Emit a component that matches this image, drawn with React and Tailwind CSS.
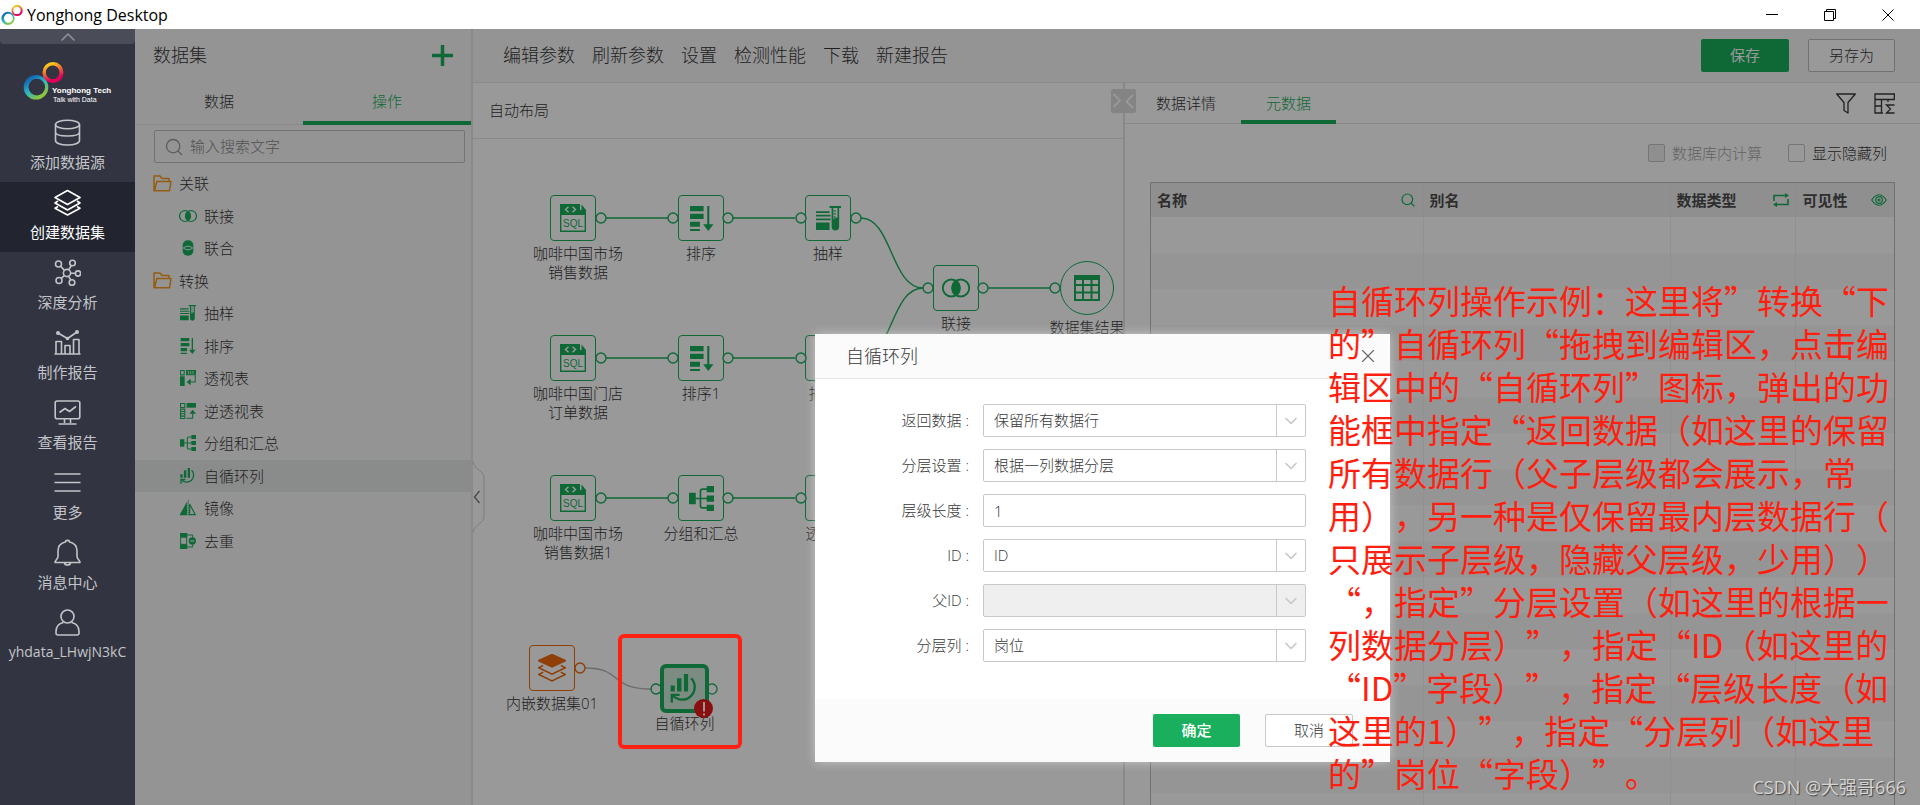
import { Search, X, ChevronDown, ChevronUp } from "lucide-react"

const MENU = [
  { label: "添加数据源", icon: DatabaseIcon },
  { label: "创建数据集", icon: LayersIcon, active: true },
  { label: "深度分析", icon: NetworkIcon },
  { label: "制作报告", icon: ReportIcon },
  { label: "查看报告", icon: MonitorIcon },
  { label: "更多", icon: MoreIcon },
  { label: "消息中心", icon: BellIcon },
  { label: "yhdata_LHwjN3kC", icon: UserIcon },
]

const TREE = [
  { label: "关联", folder: true },
  { label: "联接", icon: JoinIcon },
  { label: "联合", icon: UnionIcon },
  { label: "转换", folder: true },
  { label: "抽样", icon: SampleIcon },
  { label: "排序", icon: SortIcon },
  { label: "透视表", icon: PivotIcon },
  { label: "逆透视表", icon: UnpivotIcon },
  { label: "分组和汇总", icon: GroupIcon },
  { label: "自循环列", icon: LoopIcon, active: true },
  { label: "镜像", icon: MirrorIcon },
  { label: "去重", icon: DistinctIcon },
]

const TOOLBAR = ["编辑参数", "刷新参数", "设置", "检测性能", "下载", "新建报告"]

// x / y is the centre of the box on the canvas
const NODES = [
  { id: "sql1", x: 100, y: 79, icon: SqlIcon, lines: ["咖啡中国市场", "销售数据"] },
  { id: "sort1", x: 228, y: 79, icon: SortIcon, lines: ["排序"] },
  { id: "sample1", x: 355, y: 79, icon: SampleIcon, lines: ["抽样"] },
  { id: "sql2", x: 100, y: 219, icon: SqlIcon, lines: ["咖啡中国门店", "订单数据"] },
  { id: "sort2", x: 228, y: 219, icon: SortIcon, lines: ["排序1"] },
  { id: "sample2", x: 355, y: 219, icon: SampleIcon, lines: ["抽样1"] },
  { id: "sql3", x: 100, y: 359, icon: SqlIcon, lines: ["咖啡中国市场", "销售数据1"] },
  { id: "group", x: 228, y: 359, icon: GroupIcon, lines: ["分组和汇总"] },
  { id: "pivot", x: 355, y: 359, icon: PivotIcon, lines: ["透视表"] },
  { id: "join", x: 483, y: 149, icon: JoinIcon, lines: ["联接"] },
]

const LINKS = [
  "M133 79H195", "M260 79H322",
  "M133 219H195", "M260 219H322",
  "M133 359H195", "M260 359H322",
  "M515 149H577",
  "M388 79C419 79 418 149 450 149",
  "M388 219C419 219 418 149 450 149",
]

const PORTS = [
  [128, 79], [200, 79], [255, 79], [328, 79], [383, 79],
  [128, 219], [200, 219], [255, 219], [328, 219],
  [128, 359], [200, 359], [255, 359], [328, 359],
  [455, 149], [510, 149], [582, 149],
]

const FIELDS = [
  { id: "ret", label: "返回数据 :", value: "保留所有数据行" },
  { id: "level", label: "分层设置 :", value: "根据一列数据分层" },
  { id: "len", label: "层级长度 :", value: "1", text: true },
  { id: "id", label: "ID :", value: "ID" },
  { id: "pid", label: "父ID :", value: "", disabled: true },
  { id: "col", label: "分层列 :", value: "岗位" },
]

const NOTE = [
  "自循环列操作示例：这里将”转换“下",
  "的”自循环列“拖拽到编辑区，点击编",
  "辑区中的“自循环列”图标，弹出的功",
  "能框中指定“返回数据（如这里的保留",
  "所有数据行（父子层级都会展示，常",
  "用），另一种是仅保留最内层数据行（",
  "只展示子层级，隐藏父层级，少用））",
  "“，指定”分层设置（如这里的根据一",
  "列数据分层）”，指定“ID（如这里的",
  "“ID”字段）”，指定“层级长度（如",
  "这里的1）”，指定“分层列（如这里",
  "的”岗位“字段）”。",
]

/* ---------- sidebar icons ---------- */

function Line({ children, className = "size-[27px]" }) {
  return (
    <svg viewBox="0 0 27 27" className={className} fill="none" stroke="currentColor" strokeWidth="1.6" strokeLinejoin="round">
      {children}
    </svg>
  )
}

function DatabaseIcon() {
  return (
    <Line>
      <ellipse cx="13.5" cy="5.5" rx="12" ry="4.2" />
      <path d="M1.500 5.500V21.500C1.500 24 6.500 26 13.500 26S25.500 24 25.500 21.500V5.500M1.500 13C1.500 15.500 6.500 17 13.500 17S25.500 15.500 25.500 13" />
    </Line>
  )
}

function LayersIcon() {
  return (
    <Line>
      <path d="M13.500 1.500L26 8.500L13.500 15.500L1 8.500Z" />
      <path d="M4 12L1 14L13.500 21L26 14L23 12M4 17.500L1 19.200L13.500 26L26 19.200L23 17.500" />
    </Line>
  )
}

function NetworkIcon() {
  return (
    <Line>
      <circle cx="13" cy="14" r="3.600" />
      <circle cx="4.500" cy="5" r="3" />
      <circle cx="18.500" cy="4" r="2.800" />
      <circle cx="24" cy="14.500" r="2.600" />
      <circle cx="5" cy="21.500" r="3" />
      <circle cx="18" cy="23.500" r="2.800" />
      <path d="M6.600 7.200L10.500 11.400M17.300 6.500L14.700 10.800M16.600 14.200H21.400M7.200 19.400L10.300 16.600M14.600 17.300L16.800 21" />
    </Line>
  )
}

function ReportIcon() {
  return (
    <Line>
      <path d="M0.500 25H26.500M2 25V12.500H7.500V25M11 25V16.500H16V25M19.500 25V10.500H25V25M4 4L13.500 9.500L23 3" />
      <circle cx="4" cy="4" r="1.200" fill="currentColor" />
      <circle cx="23" cy="3" r="1.200" fill="currentColor" />
      <circle cx="13.500" cy="9.500" r="1" fill="currentColor" />
    </Line>
  )
}

function MonitorIcon() {
  return (
    <Line>
      <rect x="1.200" y="2" width="24.600" height="17.800" rx="2" />
      <path d="M5.500 13.500L11 9.500L15.500 12.500L22 7.500M10.500 20V24M16.500 20V24M4.500 25H22.500" />
    </Line>
  )
}

function MoreIcon() {
  return (
    <Line>
      <path d="M0.500 5H26.500M0.500 13.500H26.500M0.500 22H26.500" />
    </Line>
  )
}

function BellIcon() {
  return (
    <Line>
      <path d="M11.500 3C11.500 0.800 15.500 0.800 15.500 3C20 4 23 7.500 23 12V17.500C23 20 26 21.500 26 23.500H1C1 21.500 4 20 4 17.500V12C4 7.500 7 4 11.500 3ZM10.500 24C11 26.700 16 26.700 16.500 24" />
    </Line>
  )
}

function UserIcon() {
  return (
    <Line>
      <circle cx="13.500" cy="7.500" r="6.500" />
      <path d="M9.500 13.500C5 14.500 2 18 2 22.500V24Q2 26 4 26H23Q25 26 25 24V22.500C25 18 22 14.500 17.500 13.500" />
    </Line>
  )
}

/* ---------- operation icons, 24 grid ---------- */

function Glyph({ className, children }) {
  return (
    <svg viewBox="0 0 24 24" className={className} fill="currentColor">
      {children}
    </svg>
  )
}

function SqlIcon({ className }) {
  return (
    <svg viewBox="0 0 26 28" className={className} fill="none">
      <path d="M0 0H20V6H26V11H0Z" fill="currentColor" />
      <path d="M21.500 0.500L26 6H21.500Z" fill="currentColor" />
      <path d="M0.700 10V27.300H25.300V10" stroke="currentColor" strokeWidth="1.400" />
      <path d="M8.500 2.800L5.500 5.500L8.500 8.200M12.500 2.800L15.500 5.500L12.500 8.200" stroke="#fff" strokeWidth="1.400" />
      <text x="13" y="22.500" textAnchor="middle" fontSize="10" fontFamily="Liberation Sans" fill="currentColor">SQL</text>
    </svg>
  )
}

function SortIcon({ className }) {
  return (
    <Glyph className={className}>
      <path d="M1 0H14V5H1ZM1 7.500H14V12.500H1ZM1 15H10.500V20H1ZM1 22H10.500V24H1ZM17.500 0H19.500V17.500H23.500L18.500 24L13.500 17.500H17.500Z" />
    </Glyph>
  )
}

function SampleIcon({ className }) {
  return (
    <Glyph className={className}>
      <path d="M0 5H13V6.600H0ZM0 8.500H14V10.100H0ZM0 12H14V13.600H0ZM0 15.800H13V23H0Z" />
      <path d="M13 0H24V1.800H13ZM15 1.800H16.600V13H15ZM20.600 1.800H22.200V12H20.600ZM17 4H19V5.200H17ZM17 7H19V8.200H17ZM17 10H19V11.200H17Z" />
      <path d="M15 13L22.200 10.500V20A3.600 3.600 0 0 1 15 20Z" />
    </Glyph>
  )
}

function JoinIcon({ className }) {
  return (
    <Glyph className={className}>
      <circle cx="8" cy="12" r="7.300" fill="none" stroke="currentColor" strokeWidth="1.600" />
      <circle cx="16" cy="12" r="7.300" fill="none" stroke="currentColor" strokeWidth="1.600" />
      <path d="M12 5.500A8 8 0 0 1 12 18.500A8 8 0 0 1 12 5.500Z" stroke="currentColor" />
    </Glyph>
  )
}

function UnionIcon({ className }) {
  return (
    <Glyph className={className}>
      <rect x="4" y="0.500" width="16" height="23" rx="7.500" />
      <path d="M5 12Q12 6.500 19 12Q12 17.500 5 12Z" fill="none" stroke="#fff" strokeWidth="1.400" />
    </Glyph>
  )
}

function PivotIcon({ className }) {
  return (
    <Glyph className={className}>
      <path d="M0 9.500H7V24H0ZM9 0H24V8H9Z" />
      <path d="M0.700 0.700H6.300V7.300H0.700ZM22.800 8V18H15" fill="none" stroke="currentColor" strokeWidth="1.600" />
      <path d="M12.500 1.500V6.500M16 1.500V6.500M19.500 1.500V6.500" stroke="#fff" strokeWidth="1.200" />
      <path d="M10 18L16 13V23Z" />
    </Glyph>
  )
}

function UnpivotIcon({ className }) {
  return (
    <Glyph className={className}>
      <path d="M10 0H24V7H10Z" />
      <path d="M0.800 0.800H7.200V6.800H0.800ZM0.800 9.200H7.200V23.200H0.800ZM1 12.700H7M1 16.200H7M1 19.700H7M10 22.800H19V15" fill="none" stroke="currentColor" strokeWidth="1.600" />
      <path d="M14 16L19 10L24 16Z" />
    </Glyph>
  )
}

function GroupIcon({ className }) {
  return (
    <Glyph className={className}>
      <path d="M0 6.500H6.500V17.500H0ZM17 0H24V6H17ZM17 9H24V15H17ZM17 18H24V24H17Z" />
      <path d="M6 12H18M18 3H13Q11 3 11 5V19Q11 21 13 21H18" fill="none" stroke="currentColor" strokeWidth="1.600" />
    </Glyph>
  )
}

function LoopIcon({ className }) {
  return (
    <Glyph className={className}>
      <path d="M0.500 9.500H4V14.500H0.500ZM5.800 3.500H9.500V14.500H5.800ZM11.500 0H15V14.500H11.500Z" />
      <path d="M17.500 3.500A10.300 10.300 0 1 1 2.500 18" fill="none" stroke="currentColor" strokeWidth="2" />
      <path d="M1.500 23.500V17.300H8" fill="none" stroke="currentColor" strokeWidth="2" />
    </Glyph>
  )
}

function MirrorIcon({ className }) {
  return (
    <Glyph className={className}>
      <path d="M11 2V23H-1Z" />
      <path d="M14.500 6.500V22H23Z" fill="none" stroke="currentColor" strokeWidth="1.800" />
      <path d="M12.800 0V24" stroke="currentColor" strokeWidth="1.400" strokeDasharray="2 1.500" />
    </Glyph>
  )
}

function DistinctIcon({ className }) {
  return (
    <Glyph className={className}>
      <path d="M0 0H11V7H0ZM0 17H11V24H0Z" />
      <path d="M1 7V17H10V7M11 3H19V7M11 21H19V17" fill="none" stroke="currentColor" strokeWidth="1.500" />
      <circle cx="18.500" cy="12" r="5.500" />
      <path d="M15.500 12H21.500" stroke="#fff" strokeWidth="1.600" />
    </Glyph>
  )
}

function FolderIcon() {
  return (
    <svg viewBox="0 0 19 17" className="h-[17px] w-[19px]" fill="none" stroke="#f79a1c" strokeWidth="1.500" strokeLinejoin="round">
      <path d="M2.500 15.800H1V1H7L9 3.500H16V6.500M1.500 15.800L3.800 6.500H18L16.500 15.800Z" />
    </svg>
  )
}

function Rings({ className }) {
  return (
    <svg viewBox="-1 0 41 38" className={className} fill="none">
      <defs>
        <linearGradient id="cool" x1="0" y1="0" x2="0.700" y2="1">
          <stop offset="0.200" stopColor="#1268b3" />
          <stop offset="0.550" stopColor="#2cb4c4" />
          <stop offset="0.900" stopColor="#8cc63f" />
        </linearGradient>
        <linearGradient id="warm" x1="0" y1="0" x2="0.400" y2="1">
          <stop offset="0.200" stopColor="#fbc91b" />
          <stop offset="0.550" stopColor="#f0663a" />
          <stop offset="0.900" stopColor="#e4005a" />
        </linearGradient>
      </defs>
      <path fillRule="evenodd" fill="url(#cool)" d="M12 13A12.300 12.300 0 1 1 12 37.600A12.300 12.300 0 1 1 12 13ZM12.800 16.800A8.300 8.300 0 1 0 12.800 33.400A8.300 8.300 0 1 0 12.800 16.800Z" />
      <path fillRule="evenodd" fill="url(#warm)" d="M29 0A10.500 10.500 0 1 1 29 21A10.500 10.500 0 1 1 29 0ZM28.700 3.600A6.800 6.800 0 1 0 28.700 17.200A6.800 6.800 0 1 0 28.700 3.600Z" />
    </svg>
  )
}

/* ---------- layout ---------- */

function TitleBar() {
  return (
    <header className="flex h-[29px] shrink-0 items-center bg-white pl-px pr-[26px] text-black">
      <Rings className="size-[22px]" />
      <h1 className="ml-1 font-['Open_Sans'] text-[16px] leading-6">Yonghong Desktop</h1>
      <div className="ml-auto flex items-center gap-[46px]">
        <button aria-label="最小化">
          <svg viewBox="0 0 12 12" className="size-3" stroke="currentColor">
            <path d="M0 5.500H12" />
          </svg>
        </button>
        <button aria-label="还原">
          <svg viewBox="0 0 12 12" className="size-3" fill="none" stroke="currentColor">
            <path d="M0.500 2.500H9.500V11.500H0.500ZM2.500 2.500V0.500H11.500V9.500H9.500" />
          </svg>
        </button>
        <button aria-label="关闭">
          <svg viewBox="0 0 12 12" className="size-3" stroke="currentColor">
            <path d="M0.500 0.500L11.500 11.500M11.500 0.500L0.500 11.500" />
          </svg>
        </button>
      </div>
    </header>
  )
}

function Sidebar() {
  return (
    <nav className="w-[135px] shrink-0 bg-[#323541] text-[#c3c4c8]">
      <button aria-label="收起" className="flex h-[15px] w-full items-center justify-center rounded-b-sm bg-[#4a4d58] text-[#8f9199]">
        <ChevronUp size={24} strokeWidth={1.6} />
      </button>
      <div className="flex h-[68px] pl-[23px] pt-[18px]">
        <svg viewBox="0 0 112 42" className="h-[42px] w-[112px]">
          <svg width="41" height="38"><Rings /></svg>
          <text x="29" y="31" fontSize="8" fontWeight="700" fontFamily="Liberation Sans" fill="#fff">Yonghong Tech</text>
          <text x="30" y="40" fontSize="7" fontFamily="Liberation Sans" fill="#fff">Talk with Data</text>
        </svg>
      </div>
      {MENU.map(({ label, icon: Icon, active }) => (
        <a
          key={label}
          href="#"
          className={
            active
              ? "flex h-[70px] flex-col items-center gap-[6px] bg-[#22252f] pt-[7px] text-[15px] leading-5 text-white"
              : "flex h-[70px] flex-col items-center gap-[6px] pt-[7px] text-[15px] leading-5"
          }
        >
          <Icon />
          <span className={Icon === UserIcon ? "text-[14px]" : ""}>{label}</span>
        </a>
      ))}
    </nav>
  )
}

function DatasetPanel() {
  return (
    <aside className="flex w-[338px] shrink-0 flex-col border-r-2 border-[#e6e6ea] bg-[#f7f7f7]">
      <div className="flex h-[53px] items-center justify-between pl-[18px] pr-[18px]">
        <h2 className="text-[18px]">数据集</h2>
        <button aria-label="新建" className="text-[#1aaf5d]">
          <svg viewBox="0 0 21 21" className="size-[21px]" stroke="currentColor" strokeWidth="3.500">
            <path d="M0 10.500H21M10.500 0V21" />
          </svg>
        </button>
      </div>
      <div className="grid h-[43px] grid-cols-2 border-b border-[#e4e4e4] text-[15px]">
        <button className="pb-1">数据</button>
        <button className="-mb-px border-b-4 border-[#1aaf5d] text-[#1aaf5d]">操作</button>
      </div>
      <label className="ml-[19px] mr-[6px] mt-[5px] flex h-[33px] items-center gap-[6px] rounded-xs border border-[#c0c0c0] pl-[9px] text-[#999]">
        <Search size={20} strokeWidth={1.6} className="shrink-0" />
        <input aria-label="搜索" placeholder="输入搜索文字" className="w-full text-[15px] outline-none placeholder:text-[#888]" />
      </label>
      <ul className="mt-1 grid h-[390px] auto-rows-fr text-[15px]">
        {TREE.map(({ label, icon: Icon, folder, active }) => (
          <li
            key={label}
            className={
              folder
                ? "flex items-center gap-[7px] pl-[18px]"
                : active
                  ? "flex items-center gap-[7px] bg-[#e7eae9] pl-[44px]"
                  : "flex items-center gap-[7px] pl-[44px]"
            }
          >
            {folder ? <FolderIcon /> : (
              <span className="flex w-[18px] justify-center text-[#1aaf5d]">
                <Icon className={Icon === JoinIcon ? "size-[18px]" : "size-4"} />
              </span>
            )}
            {label}
          </li>
        ))}
      </ul>
    </aside>
  )
}

function Toolbar() {
  return (
    <div className="flex h-[54px] shrink-0 items-center border-b border-[#e6e6ea] bg-[#f7f7f7] pl-[30px] pr-[25px]">
      <div className="flex gap-[17px] text-[18px]">
        {TOOLBAR.map((t) => <button key={t}>{t}</button>)}
      </div>
      <div className="ml-auto flex gap-[19px] text-[15px]">
        <button className="h-[33px] w-[88px] rounded-xs bg-[#1aaf5d] font-normal text-white">保存</button>
        <button className="h-[33px] w-[87px] rounded-xs border border-[#bcbcbc] bg-white">另存为</button>
      </div>
    </div>
  )
}

function Node({ x, y, icon: Icon, lines }) {
  return (
    <div className="absolute flex size-[46px] -translate-x-1/2 -translate-y-1/2 items-center justify-center rounded-sm border border-[#1aaf5d] bg-white text-[#1aaf5d]" style={{ left: x, top: y }}>
      <Icon className={Icon === SqlIcon ? "h-7 w-[26px]" : Icon === JoinIcon ? "size-7" : "size-[25px]"} />
      <p className={
        Icon === SqlIcon
          ? "absolute left-[27px] top-[48px] -translate-x-1/2 whitespace-nowrap text-center text-[15px] leading-[19px] text-[#383838]"
          : "absolute left-1/2 top-[48px] -translate-x-1/2 whitespace-nowrap text-center text-[15px] leading-[19px] text-[#383838]"
      }>
        {lines.map((l) => <span key={l} className="block">{l}</span>)}
      </p>
    </div>
  )
}

function Canvas() {
  return (
    <section className="flex w-[652px] shrink-0 flex-col border-r-2 border-[#e3e3e3] bg-white">
      <div className="flex h-14 items-center border-b border-[#e6e6ea] pl-4 text-[15px]">
        <button>自动布局</button>
      </div>
      <div className="relative flex-1 overflow-hidden">
        {NODES.map((n) => <Node key={n.id} {...n} />)}
        <div className="absolute left-[587px] top-[122px] flex size-[54px] items-center justify-center rounded-full border border-[#1aaf5d] text-[#1aaf5d]">
          <svg viewBox="0 0 26 26" className="size-[26px]">
            <path d="M0 0H26V26H0Z" fill="currentColor" />
            <path d="M2 5H8V9H2ZM10 5H16.500V9H10ZM18.500 5H24V9H18.500ZM2 11H8V16.500H2ZM10 11H16.500V16.500H10ZM18.500 11H24V16.500H18.500ZM2 18.500H8V24H2ZM10 18.500H16.500V24H10ZM18.500 18.500H24V24H18.500Z" fill="#fff" />
          </svg>
          <p className="absolute top-[56px] whitespace-nowrap text-[15px] leading-[19px] text-[#383838]">数据集结果</p>
        </div>

        <div className="absolute left-[56px] top-[506px] flex size-[46px] items-center justify-center rounded-sm border border-[#ee6a0c] text-[#ee6a0c]">
          <svg viewBox="0 0 27 27" className="size-7" fill="none" stroke="currentColor" strokeWidth="1.500">
            <path d="M13.500 0.500L26.500 6.500L13.500 12.500L0.500 6.500Z" fill="currentColor" />
            <path d="M5 11L0.800 13.200L13.500 19.500L26.200 13.200L22 11M5 17.500L0.800 19.700L13.500 26L26.200 19.700L22 17.500" />
          </svg>
          <p className="absolute top-[48px] whitespace-nowrap text-[15px] leading-[19px] text-[#383838]">内嵌数据集01</p>
        </div>
        <div className="absolute left-[187px] top-[525px] flex size-[49px] items-center justify-center rounded-md border-4 border-[#1aaf5d] bg-[#cfeadb] text-[#1aaf5d]">
          <LoopIcon className="size-[29px]" />
          <p className="absolute top-[46px] whitespace-nowrap text-[15px] leading-[19px] text-[#383838]">自循环列</p>
        </div>
        <span className="absolute left-[221px] top-[560px] flex size-[19px] items-center justify-center rounded-full bg-[#e61a1a]">
          <svg viewBox="0 0 4 14" className="h-[14px] w-1" fill="#fff">
            <path d="M1 0H3V9.500H1ZM1 11.500H3V13.500H1Z" />
          </svg>
        </span>

        <svg className="absolute inset-0 size-full" fill="none" stroke="#1aaf5d" strokeWidth="1.400">
          {LINKS.map((d) => <path key={d} d={d} />)}
          {PORTS.map(([x, y]) => <circle key={x + "-" + y} cx={x} cy={y} r="5" fill="#fff" />)}
          <path d="M112 529C150 529 136 550 178 550" stroke="#b5b5b5" />
          <circle cx="107" cy="529" r="5" fill="#fff" stroke="#ee6a0c" />
          <path d="M187 547A5 5 0 1 0 187 553M236 546A5 5 0 1 1 236 554" />
        </svg>
        <button aria-label="收起面板" className="absolute left-0 top-[322px]">
          <svg viewBox="0 0 12 72" className="h-[72px] w-3" fill="#fff" stroke="#cfd0d6">
            <path d="M0 0.500C2 10 11 9 11 17V55C11 63 2 62 0 71.500" />
            <path d="M6.500 30L1.500 36L6.500 42" stroke="#777" fill="none" strokeWidth="1.300" />
          </svg>
        </button>
      </div>
    </section>
  )
}

function MetaPanel() {
  return (
    <section className="relative flex min-w-0 flex-1 flex-col bg-white">
      <button aria-label="切换" className="absolute -left-[14px] top-[6px] rounded-xs bg-[#dcdcdc]">
        <svg viewBox="0 0 25 24" className="h-6 w-[25px]" fill="none" stroke="#fff" strokeWidth="1.800">
          <path d="M2.500 5L9 11.500L2.500 18M22 6L15.500 12.500L22 19" />
        </svg>
      </button>
      <div className="flex h-[41px] shrink-0 border-b border-[#e4e4e4] pl-[21px] pr-[25px] text-[15px]">
        <button className="w-[80px]">数据详情</button>
        <button className="-mb-px ml-[15px] w-[95px] border-b-4 border-[#1aaf5d] pt-1 text-[#1aaf5d]">元数据</button>
        <div className="ml-auto flex items-center gap-[18px]">
          <button aria-label="过滤">
            <svg viewBox="0 0 20 21" className="h-[21px] w-5" fill="none" stroke="currentColor" strokeWidth="1.300" strokeLinejoin="round">
              <path d="M0.700 1H19.300L12 9.500V20L8 17.500V9.500Z" />
            </svg>
          </button>
          <button aria-label="汇总">
            <svg viewBox="0 0 21 21" className="size-[21px]" fill="none" stroke="currentColor" strokeWidth="1.300">
              <path d="M9 20H1V1H20.300V6.500H1M7.500 6.500V20M1 13H7.500M14 6.500V9M20.500 12H12.500L16.500 16L12.500 20H20.500" />
            </svg>
          </button>
        </div>
      </div>
      <div className="flex h-[58px] shrink-0 items-center justify-end gap-[26px] pr-[33px] text-[15px]">
        <label className="flex items-center gap-[7px] text-[#a6a6a6]">
          <input type="checkbox" disabled className="h-[18px] w-[17px] appearance-none rounded-xs border border-[#c4c4c4] bg-[#eee]" />
          数据库内计算
        </label>
        <label className="flex items-center gap-[7px]">
          <input type="checkbox" className="h-[18px] w-[17px] appearance-none rounded-xs border border-[#c4c4c4]" />
          显示隐藏列
        </label>
      </div>
      <div className="ml-[25px] mr-[25px] flex-1 overflow-hidden border border-b-0 border-[#bcbcbc]">
        <table className="w-full table-fixed text-left text-[15px]">
          <colgroup>
            <col className="w-[272px]" />
            <col />
            <col className="w-[125px]" />
            <col className="w-[99px]" />
          </colgroup>
          <thead>
            <tr className="h-[34px] bg-[#efefef] text-[#4d4d4d]">
              <th className="border-r border-[#eaeaea] pl-[6px] pr-[7px] font-bold">
                <span className="flex items-center justify-between">名称<Search size={16} strokeWidth={1.8} className="text-[#1aaf5d]" /></span>
              </th>
              <th className="border-r border-[#eaeaea] px-[6px] font-bold">别名</th>
              <th className="border-r border-[#eaeaea] px-[6px] font-bold">
                <span className="flex items-center justify-between">
                  数据类型
                  <svg viewBox="0 0 16 14" className="h-[14px] w-4 text-[#1aaf5d]" fill="none" stroke="currentColor" strokeWidth="1.600">
                    <path d="M1 8V2.500H12M15 6V11.500H4" />
                    <path d="M12 0L16 2.500L12 5ZM4 9L0 11.500L4 14Z" fill="currentColor" stroke="none" />
                  </svg>
                </span>
              </th>
              <th className="px-[7px] font-bold">
                <span className="flex items-center justify-between">
                  可见性
                  <svg viewBox="0 0 16 12" className="h-3 w-4 text-[#1aaf5d]" fill="none" stroke="currentColor" strokeWidth="1.200">
                    <path d="M0.700 6Q8 -4.500 15.300 6Q8 16.500 0.700 6Z" />
                    <circle cx="8" cy="6" r="3.400" />
                    <circle cx="8" cy="6" r="1" />
                  </svg>
                </span>
              </th>
            </tr>
          </thead>
          <tbody>
            {Array.from({ length: 17 }, (_, i) => (
              <tr key={i} className="h-9 even:bg-[#f9f9f9]">
                <td className="border-r border-[#f0f0f0]" />
                <td className="border-r border-[#f0f0f0]" />
                <td className="border-r border-[#f0f0f0]" />
                <td />
              </tr>
            ))}
          </tbody>
        </table>
      </div>
    </section>
  )
}

function Field({ id, label, value, text, disabled }) {
  const box = "h-[33px] w-full appearance-none rounded-xs border border-[#c8c8c8] bg-white px-[10px] outline-none disabled:bg-[#efefef]"
  return (
    <div className="flex items-center gap-[14px]">
      <label htmlFor={id} className="w-[154px] text-right">{label}</label>
      <div className="relative w-[323px]">
        {text ? <input id={id} defaultValue={value} className={box} /> : (
          <>
            <select id={id} disabled={disabled} className={box}>
              <option>{value}</option>
            </select>
            <span className="pointer-events-none absolute inset-y-px right-px flex w-[29px] items-center justify-center border-l border-[#c8c8c8] text-[#c8c8c8]">
              <ChevronDown size={20} strokeWidth={2} />
            </span>
          </>
        )}
      </div>
    </div>
  )
}

function LoopDialog() {
  return (
    <div role="dialog" aria-label="自循环列" className="absolute left-[680px] top-[305px] w-[575px] bg-white text-[15px] shadow-[0_0_10px_rgba(255,255,255,0.45)]">
      <div className="flex h-[45px] items-center justify-between border-b border-[#e8e8ea] bg-[#fbfbfb] pl-[31px] pr-[11px]">
        <h2 className="text-[18px]">自循环列</h2>
        <button aria-label="关闭" className="text-[#666]"><X size={22} strokeWidth={1.2} /></button>
      </div>
      <div className="flex flex-col gap-3 pb-[37px] pt-[25px]">
        {FIELDS.map((f) => <Field key={f.id} {...f} />)}
      </div>
      <div className="flex h-[63px] items-center justify-end gap-[25px] bg-[#fbfbfb] pr-[37px]">
        <button className="h-[33px] w-[87px] rounded-xs bg-[#1aaf5d] font-medium text-white">确定</button>
        <button className="h-[33px] w-[88px] rounded-xs border border-[#c8c8c8] bg-white">取消</button>
      </div>
    </div>
  )
}

export default function App() {
  return (
    <div className="relative flex h-screen flex-col overflow-hidden font-['Open_Sans','Noto_Sans_CJK_SC',sans-serif]">
      <TitleBar />
      <div className="flex min-h-0 flex-1">
        <Sidebar />
        <main className="relative flex min-w-0 flex-1 font-light text-[#383838]">
          <DatasetPanel />
          <div className="flex min-w-0 flex-1 flex-col">
            <Toolbar />
            <div className="flex min-h-0 flex-1">
              <Canvas />
              <MetaPanel />
            </div>
          </div>
          <div className="absolute inset-0 bg-black/40" />
          <LoopDialog />
        </main>
      </div>

      <div className="absolute left-[618px] top-[634px] h-[115px] w-[124px] rounded-md border-4 border-[#ff2114]" />
      <p className="absolute left-[1328px] top-[279px] whitespace-nowrap font-['Noto_Sans_CJK_SC',sans-serif] text-[33px] leading-[43px] text-[#ff1f10] [text-spacing-trim:space-all]">
        {NOTE.map((l) => <span key={l} className="block">{l}</span>)}
      </p>
      <p className="absolute bottom-1 right-[14px] text-[18px] leading-7 text-[#d4d4d4] [text-shadow:1px_1px_1px_#444]">CSDN @大强哥666</p>
    </div>
  )
}
